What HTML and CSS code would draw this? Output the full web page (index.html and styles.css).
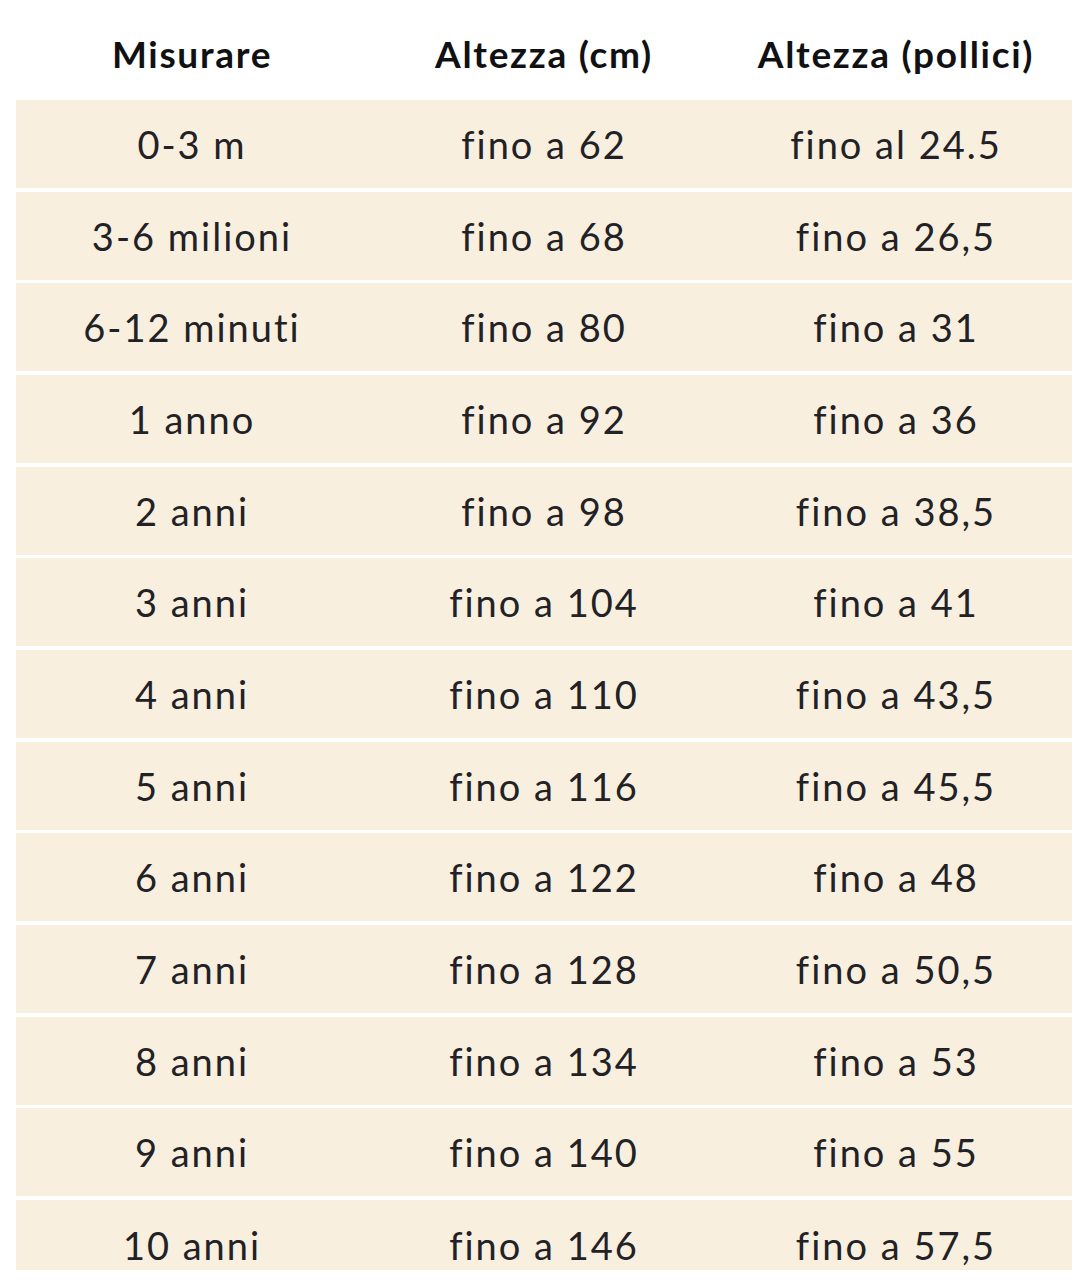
FILE: index.html
```
<!DOCTYPE html>
<html lang="it">
<head>
<meta charset="utf-8">
<link rel="stylesheet" href="styles.css">
</head>
<body>
<div class="table">
  <div class="row head"><div>Misurare</div><div>Altezza (cm)</div><div>Altezza (pollici)</div></div>
  <div class="row"><div>0-3 m</div><div>fino a 62</div><div>fino al 24.5</div></div>
  <div class="row"><div>3-6 milioni</div><div>fino a 68</div><div>fino a 26,5</div></div>
  <div class="row"><div>6-12 minuti</div><div>fino a 80</div><div>fino a 31</div></div>
  <div class="row"><div>1 anno</div><div>fino a 92</div><div>fino a 36</div></div>
  <div class="row"><div>2 anni</div><div>fino a 98</div><div>fino a 38,5</div></div>
  <div class="row"><div>3 anni</div><div>fino a 104</div><div>fino a 41</div></div>
  <div class="row"><div>4 anni</div><div>fino a 110</div><div>fino a 43,5</div></div>
  <div class="row"><div>5 anni</div><div>fino a 116</div><div>fino a 45,5</div></div>
  <div class="row"><div>6 anni</div><div>fino a 122</div><div>fino a 48</div></div>
  <div class="row"><div>7 anni</div><div>fino a 128</div><div>fino a 50,5</div></div>
  <div class="row"><div>8 anni</div><div>fino a 134</div><div>fino a 53</div></div>
  <div class="row"><div>9 anni</div><div>fino a 140</div><div>fino a 55</div></div>
  <div class="row last"><div>10 anni</div><div>fino a 146</div><div>fino a 57,5</div></div>
</div>
</body>
</html>
```
FILE: styles.css
```
html, body {
  margin: 0;
  padding: 0;
  background: #ffffff;
}
body {
  width: 1080px;
  height: 1284px;
  overflow: hidden;
  font-family: "Lato", "Liberation Sans", sans-serif;
  font-variant-ligatures: none;
  color: #222226;
}
.table {
  margin-left: 16px;
  width: 1056px;
  display: flex;
  flex-direction: column;
  gap: 3.67px;
}
.row {
  display: grid;
  grid-template-columns: 1fr 1fr 1fr;
  height: 88px;
  background: #f8efdf;
  font-size: 38px;
  letter-spacing: 2px;
  line-height: 88px;
  text-align: center;
  overflow: hidden;
}
.row.head {
  background: #ffffff;
  height: 100px;
  line-height: 108px;
  font-size: 37px;
  letter-spacing: 1.7px;
  font-weight: 700;
  margin-bottom: -3.67px;
  color: #111114;
}
.row.last {
  height: 70px;
}
.row.last > div {
  margin-top: 1px;
}
```
